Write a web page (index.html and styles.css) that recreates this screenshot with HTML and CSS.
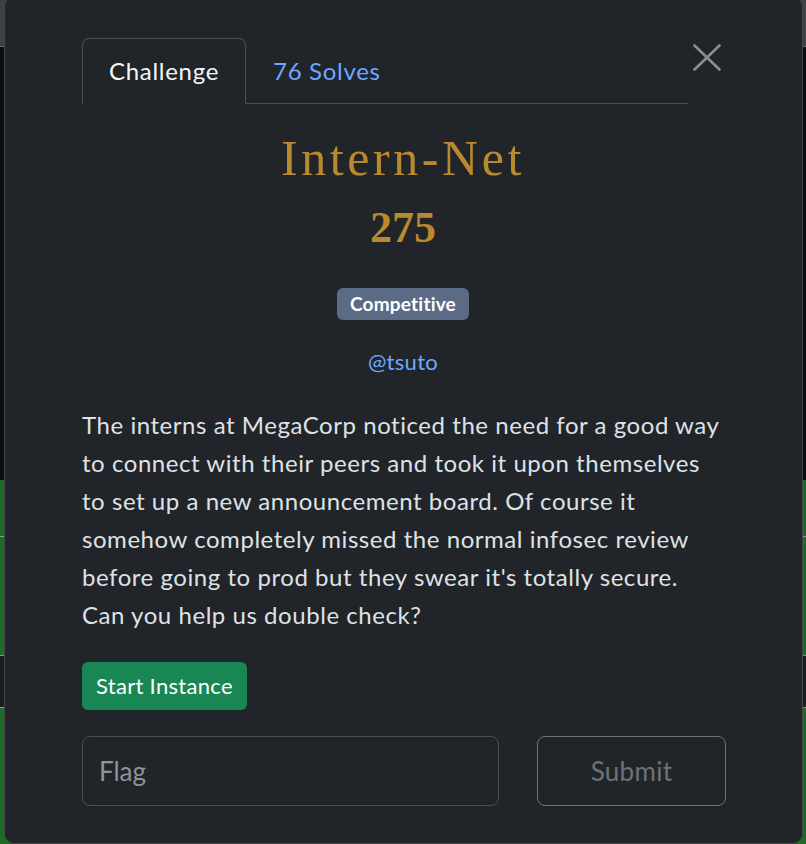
FILE: index.html
```html
<!DOCTYPE html>
<html lang="en">
<head>
<meta charset="utf-8">
<title>Intern-Net</title>
<link rel="stylesheet" href="styles.css">
</head>
<body>
<div class="backdrop">
  <div class="bd-row bd-top"></div>
  <div class="bd-row bd-dark"></div>
  <div class="bd-row bd-green bd-g1"></div>
  <div class="bd-row bd-green bd-g2"></div>
  <div class="bd-row bd-mid"></div>
  <div class="bd-row bd-green bd-g3"></div>
</div>

<div class="modal">
  <div class="modal-header">
    <ul class="tabs">
      <li class="tab active">Challenge</li>
      <li class="tab link">76 Solves</li>
    </ul>
    <button class="close" aria-label="Close">
      <svg width="28" height="27" viewBox="0 0 28 27"><path d="M1.5 1.5 L26.5 25.5 M26.5 1.5 L1.5 25.5" stroke="#8b8e91" stroke-width="2.6" stroke-linecap="round" fill="none"/></svg>
    </button>
  </div>

  <div class="modal-body">
    <h2 class="title">Intern-Net</h2>
    <h3 class="points">275</h3>
    <div class="badge-row"><span class="badge">Competitive</span></div>
    <div class="author">@tsuto</div>
    <p class="desc">The interns at MegaCorp noticed the need for a good way to connect with their peers and took it upon themselves to set up a new announcement board. Of course it somehow completely missed the normal infosec review before going to prod but they swear it's totally secure. Can you help us double check?</p>
    <button class="start">Start Instance</button>
    <div class="flag-row">
      <input class="flag" type="text" placeholder="Flag">
      <button class="submit">Submit</button>
    </div>
  </div>
</div>
</body>
</html>
```

FILE: styles.css
```css
* { box-sizing: border-box; }

html, body {
  margin: 0;
  padding: 0;
  width: 806px;
  height: 844px;
  overflow: hidden;
  background: #0c0d0e;
  font-family: Lato, "Noto Sans", sans-serif;
}

.backdrop {
  display: flex;
  flex-direction: column;
  width: 806px;
  height: 844px;
}
.bd-row { width: 100%; }
.bd-top { height: 47px; background: #3e4144; border-bottom: 1px solid #6a6d70; }
.bd-dark { height: 433px; background: #0b0c0d; }
.bd-green { background: #1d6b24; border-top: 1px solid #8a9a8c; }
.bd-g1 { height: 56px; border-top: none; }
.bd-g2 { height: 119px; }
.bd-mid { height: 52px; background: #1b1c1e; border-top: 1px solid #8a8c8e; }
.bd-g3 { flex: 1; }

.modal {
  position: absolute;
  left: 4px;
  top: -4px;
  width: 799px;
  height: 848px;
  background: #212529;
  border: 1px solid #44484d;
  border-radius: 10px;
  padding: 41px 78px 0 77px;
  color: #dee2e6;
}

.modal-header {
  display: flex;
  align-items: flex-start;
}

.tabs {
  list-style: none;
  margin: 0;
  padding: 0;
  width: 606px;
  display: flex;
  border-bottom: 1px solid #4b5056;
}

.tab {
  font-size: 24px;
  line-height: 38px;
  letter-spacing: 0.7px;
  padding: 13px 26px;
  border: 1px solid transparent;
  margin-bottom: -1px;
  border-radius: 7px 7px 0 0;
}
.tab.active {
  color: #f4f5f6;
  background: #212529;
  border-color: #4b5056 #4b5056 #212529;
  padding-left: 26px;
  padding-right: 26px;
}
.tab.link { color: #6ea8fe; padding-left: 26px; }

.close {
  margin: 6px 0 0 5px;
  padding: 0;
  border: 0;
  background: transparent;
  width: 28px;
  height: 27px;
  display: block;
}
.close svg { display: block; }

.modal-body {
  display: flex;
  flex-direction: column;
  align-items: stretch;
}

.title {
  margin: 24px 0 0;
  text-align: center;
  font-family: "Liberation Serif", "Times New Roman", serif;
  font-weight: normal;
  font-size: 50px;
  line-height: 60px;
  letter-spacing: 3.6px;
  color: #b9892d;
}

.points {
  margin: 14px 0 0;
  text-align: center;
  font-family: "Liberation Serif", "Times New Roman", serif;
  font-weight: bold;
  font-size: 44px;
  line-height: 52px;
  color: #b9892d;
}

.badge-row {
  margin-top: 34px;
  display: flex;
  justify-content: center;
}
.badge {
  display: inline-block;
  background: #5b6b86;
  color: #ffffff;
  font-weight: bold;
  font-size: 19px;
  line-height: 22px;
  letter-spacing: 0.2px;
  padding: 5px 13px;
  border-radius: 6px;
}

.author {
  margin-top: 25px;
  text-align: center;
  color: #6ea8fe;
  font-size: 22px;
  line-height: 33px;
  letter-spacing: 0.3px;
}

.desc {
  margin: 28px 0 0;
  font-size: 24px;
  line-height: 38px;
  letter-spacing: 0.55px;
  color: #dee2e6;
}

.start {
  align-self: flex-start;
  margin-top: 28px;
  background: #198754;
  color: #ffffff;
  border: 0;
  border-radius: 6px;
  font-family: Lato, "Noto Sans", sans-serif;
  font-size: 22px;
  line-height: 28px;
  letter-spacing: 0.3px;
  padding: 10px 14px;
}

.flag-row {
  margin-top: 26px;
  display: flex;
  gap: 38px;
}

.flag {
  flex: 0 0 417px;
  width: 417px;
  height: 70px;
  background: #212529;
  border: 1px solid #4b5056;
  border-radius: 8px;
  padding: 0 16px;
  font-family: Lato, "Noto Sans", sans-serif;
  font-size: 26px;
  color: #dee2e6;
  outline: none;
}
.flag::placeholder { color: #8e949a; }

.submit {
  flex: 0 0 189px;
  width: 189px;
  height: 70px;
  background: transparent;
  border: 1px solid #6c737a;
  border-radius: 8px;
  font-family: Lato, "Noto Sans", sans-serif;
  font-size: 26px;
  letter-spacing: 0.3px;
  color: #6c737a;
}
```
